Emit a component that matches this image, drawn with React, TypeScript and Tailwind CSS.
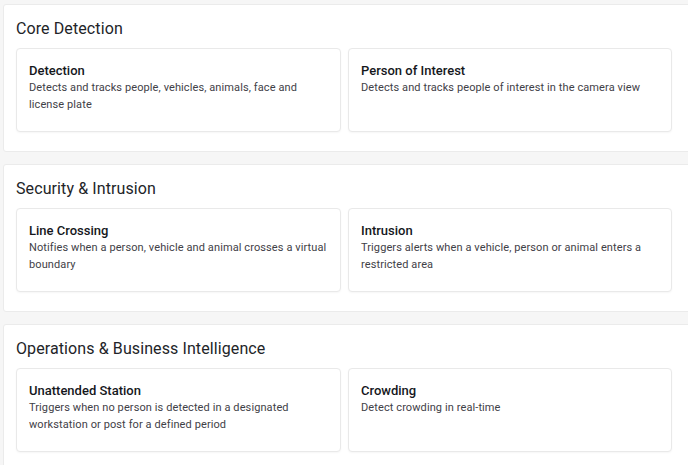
import React from "react";

type Item = { title: string; desc: string };
type Section = { heading: string; items: Item[] };

const sections: Section[] = [
  {
    heading: "Core Detection",
    items: [
      { title: "Detection", desc: "Detects and tracks people, vehicles, animals, face and license plate" },
      { title: "Person of Interest", desc: "Detects and tracks people of interest in the camera view" },
    ],
  },
  {
    heading: "Security & Intrusion",
    items: [
      { title: "Line Crossing", desc: "Notifies when a person, vehicle and animal crosses a virtual boundary" },
      { title: "Intrusion", desc: "Triggers alerts when a vehicle, person or animal enters a restricted area" },
    ],
  },
  {
    heading: "Operations & Business Intelligence",
    items: [
      { title: "Unattended Station", desc: "Triggers when no person is detected in a designated workstation or post for a defined period" },
      { title: "Crowding", desc: "Detect crowding in real-time" },
    ],
  },
];

export default function App() {
  return (
    <div
      className="w-[688px] h-[465px] overflow-hidden bg-[#f6f6f6] pt-[4px] pl-[3px]"
      style={{ fontFamily: "Roboto, 'Noto Sans', sans-serif" }}
    >
      <div className="flex flex-col gap-[12px] w-[710px]">
        {sections.map((s) => (
          <div
            key={s.heading}
            className="bg-white border border-[#ebebeb] rounded-[3px] pt-[12px] pl-[12px] pb-[19px] h-[148px]"
          >
            <h2 className="text-[16px] leading-[24px] text-[#222428] font-normal tracking-[0.1px]">
              {s.heading}
            </h2>
            <div className="mt-[7px] grid grid-cols-[325px_324px] gap-[7px]">
              {s.items.map((it) => (
                <div
                  key={it.title}
                  className="h-[84px] bg-white border border-[#e9e9e9] rounded-[4px] shadow-[0_1px_2px_rgba(0,0,0,0.04)] px-[12px] pt-[13px]"
                >
                  <div className="text-[13px] leading-[18px] font-medium text-[#15171c]">{it.title}</div>
                  <div className="text-[11px] leading-[17px] text-[#3f4147] tracking-[0.1px] mt-[-1px]">{it.desc}</div>
                </div>
              ))}
            </div>
          </div>
        ))}
      </div>
    </div>
  );
}
